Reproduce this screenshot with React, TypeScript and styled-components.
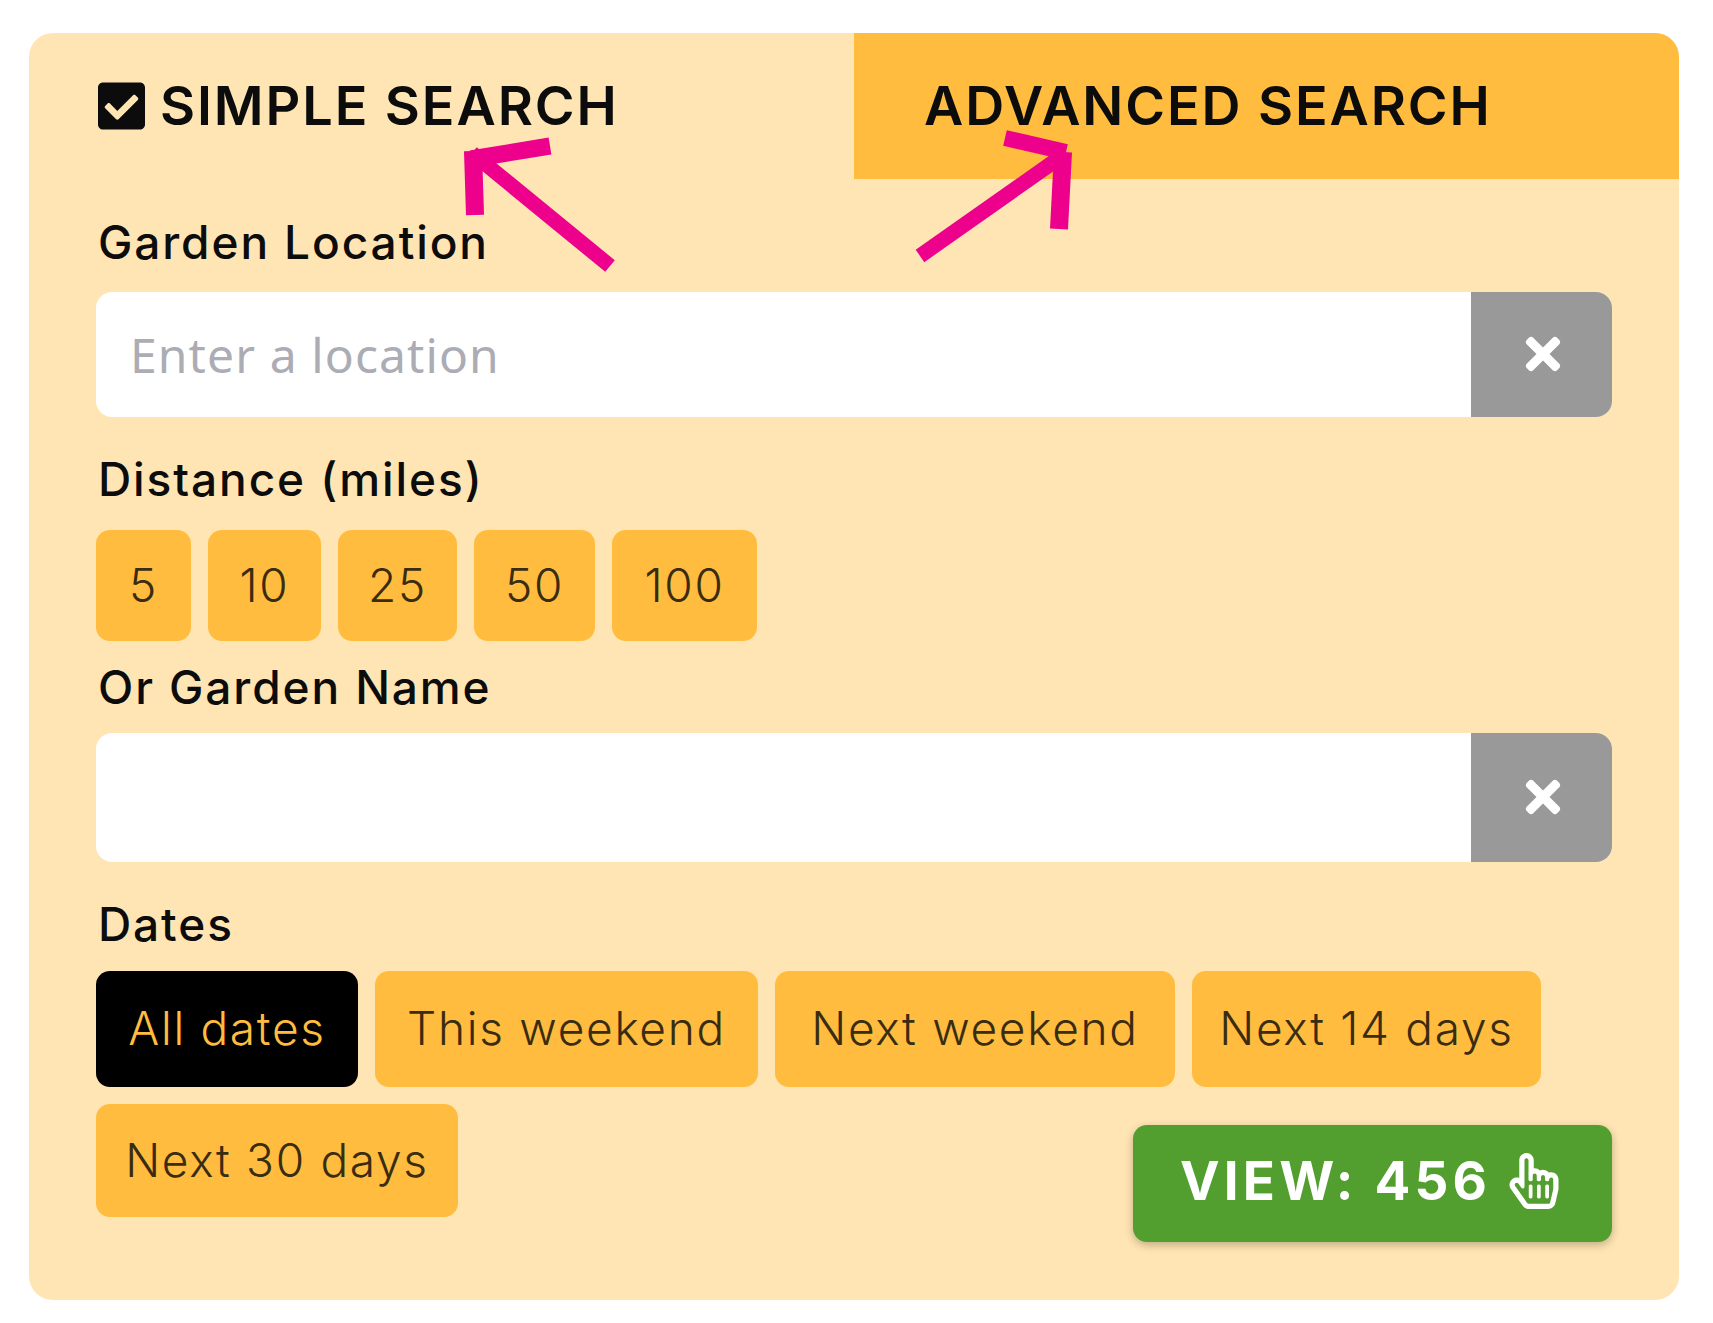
import React from "react";
import styled, { createGlobalStyle } from "styled-components";
import { FaCheckSquare, FaTimes, FaRegHandPointer } from "react-icons/fa";

const Global = createGlobalStyle`
  html, body { margin: 0; padding: 0; background: #fff; }
  * { box-sizing: border-box; }
`;

const Page = styled.div`
  position: relative;
  width: 1713px;
  height: 1323px;
  padding: 33px 34px 23px 29px;
  font-family: Inter, "Liberation Sans", sans-serif;
  color: #0c0c0c;
`;

const Panel = styled.section`
  width: 1650px;
  height: 1267px;
  background: #ffe5b3;
  border-radius: 24px;
  overflow: hidden;
`;

const Tabs = styled.div`
  display: grid;
  grid-template-columns: 825px 825px;
  height: 146px;
`;

const Tab = styled.div<{ $active?: boolean }>`
  display: flex;
  align-items: center;
  gap: 15px;
  padding: 0 0 1px ${(p) => (p.$active ? "69px" : "70px")};
  background: ${(p) => (p.$active ? "transparent" : "#ffbc3f")};
  font-size: 54px;
  font-weight: 600;
  letter-spacing: 1.9px;
  white-space: nowrap;
  svg { width: 47px; height: 54px; flex: none; }
`;

const Body = styled.div`
  padding: 38px 67px 0;
`;

const Label = styled.div<{ $top?: number; $bottom?: number }>`
  height: 50px;
  line-height: 50px;
  margin-top: ${(p) => p.$top ?? 0}px;
  margin-bottom: ${(p) => p.$bottom ?? 0}px;
  padding-left: 2px;
  font-size: 46px;
  font-weight: 500;
  letter-spacing: 1.9px;
  white-space: nowrap;
`;

const InputRow = styled.div<{ $h: number }>`
  display: flex;
  height: ${(p) => p.$h}px;
  border-radius: 16px;
  overflow: hidden;
  background: #fff;
`;

const TextInput = styled.input`
  flex: 1;
  min-width: 0;
  border: 0;
  outline: 0;
  padding: 0 0 0 34px;
  background: transparent;
  font-family: "Noto Sans", sans-serif;
  font-size: 48px;
  letter-spacing: 1.1px;
  &::placeholder { color: #acacb4; opacity: 1; }
`;

const ClearButton = styled.button`
  width: 141px;
  border: 0;
  padding: 0;
  background: #999999;
  color: #fff;
  display: flex;
  align-items: center;
  justify-content: center;
  svg { width: 46px; height: 50px; margin-top: -1px; margin-left: 3px; }
`;

const ChipRow = styled.div<{ $top?: number }>`
  display: flex;
  gap: 17px;
  margin-top: ${(p) => p.$top ?? 0}px;
`;

const Chip = styled.button<{ $w: number; $h: number; $on?: boolean }>`
  width: ${(p) => p.$w}px;
  height: ${(p) => p.$h}px;
  flex: none;
  border: 0;
  padding: 0 0 2px;
  border-radius: 14px;
  background: ${(p) => (p.$on ? "#000" : "#ffbc3f")};
  color: ${(p) => (p.$on ? "#ffbc3f" : "#3a2c10")};
  font-family: Inter, "Liberation Sans", sans-serif;
  font-size: 46px;
  font-weight: 300;
  letter-spacing: 1.7px;
  white-space: nowrap;
`;

const ViewButton = styled.button`
  margin: 21px 0 0 auto;
  width: 479px;
  height: 117px;
  border: 0;
  border-radius: 14px;
  background: #529e2e;
  box-shadow: 0 3px 8px rgba(0, 0, 0, 0.25);
  color: #fff;
  display: flex;
  align-items: center;
  gap: 17px;
  padding: 0 0 6px 47px;
  font-family: Inter, "Liberation Sans", sans-serif;
  font-size: 53px;
  font-weight: 700;
  letter-spacing: 4.2px;
  white-space: nowrap;
  svg { width: 52px; height: 56px; flex: none; }
`;

const Arrows = styled.svg`
  position: absolute;
  left: 0;
  top: 0;
  pointer-events: none;
`;

export default function App() {
  return (
    <Page>
      <Global />
      <Panel>
        <Tabs>
          <Tab $active>
            <FaCheckSquare />
            SIMPLE SEARCH
          </Tab>
          <Tab>ADVANCED SEARCH</Tab>
        </Tabs>
        <Body>
          <Label $bottom={25}>Garden Location</Label>
          <InputRow $h={125}>
            <TextInput placeholder="Enter a location" />
            <ClearButton><FaTimes /></ClearButton>
          </InputRow>
          <Label $top={37} $bottom={26}>Distance (miles)</Label>
          <ChipRow>
            <Chip $w={95} $h={111}>5</Chip>
            <Chip $w={113} $h={111}>10</Chip>
            <Chip $w={119} $h={111}>25</Chip>
            <Chip $w={121} $h={111}>50</Chip>
            <Chip $w={145} $h={111}>100</Chip>
          </ChipRow>
          <Label $top={21} $bottom={21}>Or Garden Name</Label>
          <InputRow $h={129}>
            <TextInput />
            <ClearButton><FaTimes /></ClearButton>
          </InputRow>
          <Label $top={37} $bottom={22}>Dates</Label>
          <ChipRow>
            <Chip $w={262} $h={116} $on>All dates</Chip>
            <Chip $w={383} $h={116}>This weekend</Chip>
            <Chip $w={400} $h={116}>Next weekend</Chip>
            <Chip $w={349} $h={116}>Next 14 days</Chip>
          </ChipRow>
          <ChipRow $top={17}>
            <Chip $w={362} $h={113}>Next 30 days</Chip>
            <ViewButton>VIEW: 456 <FaRegHandPointer /></ViewButton>
          </ChipRow>
        </Body>
      </Panel>
      <Arrows width="1713" height="1323" viewBox="0 0 1713 1323" fill="none" stroke="#ec008c" strokeWidth="15">
        <path d="M610 266 L472 153" />
        <path d="M473 151 L475 215" strokeWidth="18" />
        <path d="M471 159 L550 146" strokeWidth="17" />
        <path d="M920 256 L1062 156" />
        <path d="M1005 138 L1066 152" strokeWidth="16" />
        <path d="M1063 152 L1059 229" strokeWidth="18" />
      </Arrows>
    </Page>
  );
}
